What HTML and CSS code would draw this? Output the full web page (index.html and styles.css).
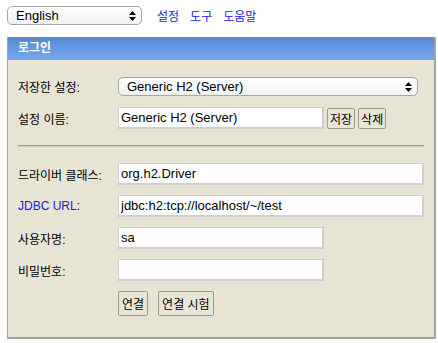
FILE: index.html
```
<!DOCTYPE html>
<html lang="ko">
<head>
  <meta charset="UTF-8">
  <title>H2 Console</title>
  <link rel="stylesheet" href="styles.css">
</head>
<body>

<!-- Top bar -->
<div class="top-bar">
  <div class="select-wrap lang">
    <select class="mac-select">
      <option>English</option>
    </select>
    <svg class="arrows" width="7" height="10" viewBox="0 0 7 10"><path d="M3.5 0L7 4H0z M3.5 10L0 6h7z" fill="#000"/></svg>
  </div>
  <a href="#" class="top-link">설정</a>
  <a href="#" class="top-link">도구</a>
  <a href="#" class="top-link">도움말</a>
</div>

<!-- Login panel -->
<div class="login">
  <div class="login-head">로그인</div>
  <div class="login-body">
    <div class="row">
      <span class="label">저장한 설정:</span>
      <div class="select-wrap saved">
        <select class="mac-select">
          <option>Generic H2 (Server)</option>
        </select>
        <svg class="arrows" width="7" height="10" viewBox="0 0 7 10"><path d="M3.5 0L7 4H0z M3.5 10L0 6h7z" fill="#000"/></svg>
      </div>
    </div>
    <div class="row">
      <span class="label">설정 이름:</span>
      <input class="field short" type="text" value="Generic H2 (Server)">
      <button class="btn tight">저장</button>
      <button class="btn tight">삭제</button>
    </div>

    <div class="divider"><hr></div>

    <div class="row">
      <span class="label">드라이버 클래스:</span>
      <input class="field wide" type="text" value="org.h2.Driver">
    </div>
    <div class="row">
      <span class="label"><a href="#" class="link">JDBC URL</a>:</span>
      <input class="field wide" type="text" value="jdbc:h2:tcp://localhost/~/test">
    </div>
    <div class="row">
      <span class="label">사용자명:</span>
      <input class="field short" type="text" value="sa">
    </div>
    <div class="row">
      <span class="label">비밀번호:</span>
      <input class="field short" type="password" value="">
    </div>
    <div class="row buttons">
      <span class="label"></span>
      <button class="btn">연결</button>
      <button class="btn gap">연결 시험</button>
    </div>
  </div>
</div>

</body>
</html>
```

FILE: styles.css
```
body {
  margin: 0;
  padding: 6px 5px 0 7px;
  background: #fff;
  font-family: "Liberation Sans", Arial, "Noto Sans CJK KR", sans-serif;
  font-size: 13px;
  color: #000;
}

/* Top bar */
.top-bar {
  display: flex;
  align-items: center;
  height: 19px;
}
.top-link {
  color: #1a1ae6;
  text-decoration: none;
  margin-left: 15px;
  font-size: 12px;
}
.top-link + .top-link { margin-left: 11px; }

.select-wrap {
  position: relative;
  display: inline-block;
}
.mac-select {
  appearance: none;
  -webkit-appearance: none;
  font-family: inherit;
  font-size: 13px;
  height: 19px;
  padding: 0 0 0 8px;
  border: 1px solid #a6a6a6;
  border-radius: 5px;
  background: linear-gradient(#ffffff, #f1f1f1);
  color: #000;
}
.lang .mac-select { width: 135px; }
.saved .mac-select { width: 300px; }
.select-wrap .arrows {
  position: absolute;
  right: 6px;
  top: 5px;
}

/* Login panel */
.login {
  margin-top: 12px;
  width: 426px;
  border: 1px solid #a4a395;
  border-top: none;
  border-right-width: 2px;
  border-bottom-width: 2px;
  background: #e7e4d4;
}
.login-head {
  height: 23px;
  line-height: 23px;
  padding-left: 10px;
  color: #fff;
  font-size: 12px;
  font-weight: bold;
  background: linear-gradient(#5788d3, #74a9ec);
}
.login-body {
  padding: 10px 10px 17px 10px;
}

.row {
  display: flex;
  align-items: center;
  height: 32px;
}
.label {
  width: 100px;
  flex: none;
  font-size: 12px;
}
.link {
  color: #1a1ae6;
  text-decoration: none;
}

.field {
  box-sizing: border-box;
  height: 22px;
  border-style: solid;
  border-width: 1px 2px 2px 1px;
  border-color: #cfcfcf;
  background: #fff;
  padding: 0 2px;
  font-family: inherit;
  font-size: 13px;
  color: #000;
}
.short { width: 206px; }
.wide { width: 306px; }

.btn {
  box-sizing: border-box;
  height: 21px;
  margin-left: 3px;
  padding: 0 2px;
  border: 1px solid #9c9b91;
  border-radius: 2px;
  background: #e9e6d7;
  font-family: inherit;
  font-size: 12px;
  color: #000;
}
.buttons { height: 34px; }
.buttons .btn {
  height: 25px;
  margin-left: 0;
  padding: 0 3px;
}
.buttons .gap { margin-left: 10px; }

.divider {
  height: 24px;
  display: flex;
  align-items: center;
}
.divider hr {
  width: 100%;
  margin: 0;
  border: none;
  border-top: 1px solid #9a9a9a;
  border-bottom: 1px solid #d6d3c4;
}
```
